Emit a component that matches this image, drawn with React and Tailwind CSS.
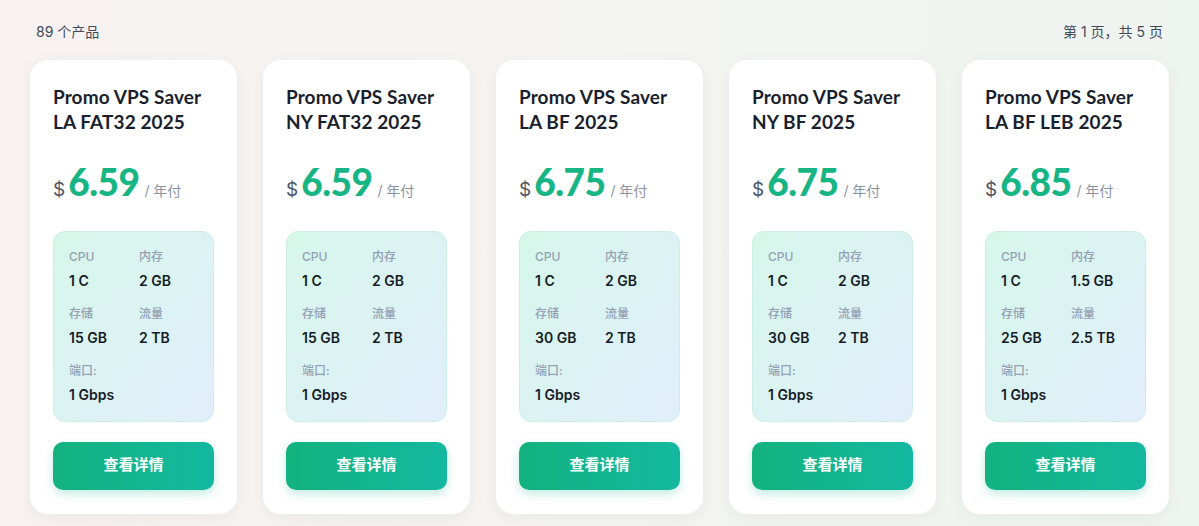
const products = [
  { name: 'Promo VPS Saver LA FAT32 2025', price: '6.59', cpu: '1 C', ram: '2 GB', disk: '15 GB', bw: '2 TB', port: '1 Gbps' },
  { name: 'Promo VPS Saver NY FAT32 2025', price: '6.59', cpu: '1 C', ram: '2 GB', disk: '15 GB', bw: '2 TB', port: '1 Gbps' },
  { name: 'Promo VPS Saver LA BF 2025', price: '6.75', cpu: '1 C', ram: '2 GB', disk: '30 GB', bw: '2 TB', port: '1 Gbps' },
  { name: 'Promo VPS Saver NY BF 2025', price: '6.75', cpu: '1 C', ram: '2 GB', disk: '30 GB', bw: '2 TB', port: '1 Gbps' },
  { name: 'Promo VPS Saver LA BF LEB 2025', price: '6.85', cpu: '1 C', ram: '1.5 GB', disk: '25 GB', bw: '2.5 TB', port: '1 Gbps' },
];

const sans = "font-['Inter','Noto_Sans_CJK_SC',sans-serif]";
const head = "font-['Lato','Noto_Sans_CJK_SC',sans-serif]";

function Spec({ label, value }) {
  return (
    <div className="flex flex-col">
      <span className="text-[12px] leading-[16px] font-medium text-[#94a0b4]">{label}</span>
      <span className="mt-[7px] text-[14px] leading-[18px] font-semibold text-[#161b26]">{value}</span>
    </div>
  );
}

function Card({ p }) {
  return (
    <div className="flex flex-col rounded-[18px] bg-white px-[23px] pt-[24px] pb-[24px] shadow-[0_4px_16px_rgba(30,40,60,0.05)]">
      <h3 className={`${head} text-[19px] leading-[25px] font-bold text-[#1a1f2e] tracking-[0.1px]`}>{p.name}</h3>
      <div className="mt-[28px] flex items-baseline">
        <span className="text-[19px] text-[#4b5565] mr-[3px]">$</span>
        <span className={`${head} text-[37px] leading-[40px] font-black text-[#17b584] tracking-[-0.5px]`}>{p.price}</span>
        <span className="ml-[5px] text-[14px] text-[#8b93a4]">/ 年付</span>
      </div>
      <div className="mt-[26px] h-[191px] rounded-[12px] border border-[#cdeee4] bg-gradient-to-br from-[#d6f7ea] to-[#e1eefb] px-[15px] pt-[17px]">
        <div className="grid grid-cols-[70px_1fr] gap-y-[16px]">
          <Spec label="CPU" value={p.cpu} />
          <Spec label="内存" value={p.ram} />
          <Spec label="存储" value={p.disk} />
          <Spec label="流量" value={p.bw} />
          <Spec label="端口:" value={p.port} />
        </div>
      </div>
      <button className="mt-[20px] h-[48px] rounded-[10px] bg-gradient-to-r from-[#13b27e] to-[#14b8a0] text-white text-[15px] font-bold shadow-[0_4px_10px_rgba(20,180,140,0.25)]">
        查看详情
      </button>
    </div>
  );
}

export default function App() {
  return (
    <div className={`${sans} min-h-[526px] w-[1199px] overflow-hidden bg-gradient-to-r from-[#f7f2f1] via-[#f4f4f2] to-[#eef4f0] px-[30px] pt-[22px]`}>
      <div className="flex items-center justify-between px-[6px] text-[14px] leading-[20px] text-[#434b5a]">
        <span>89 个产品</span>
        <span>第 1 页，共 5 页</span>
      </div>
      <div className="mt-[18px] grid grid-cols-5 gap-[26px]">
        {products.map((p) => (
          <Card key={p.name} p={p} />
        ))}
      </div>
    </div>
  );
}
